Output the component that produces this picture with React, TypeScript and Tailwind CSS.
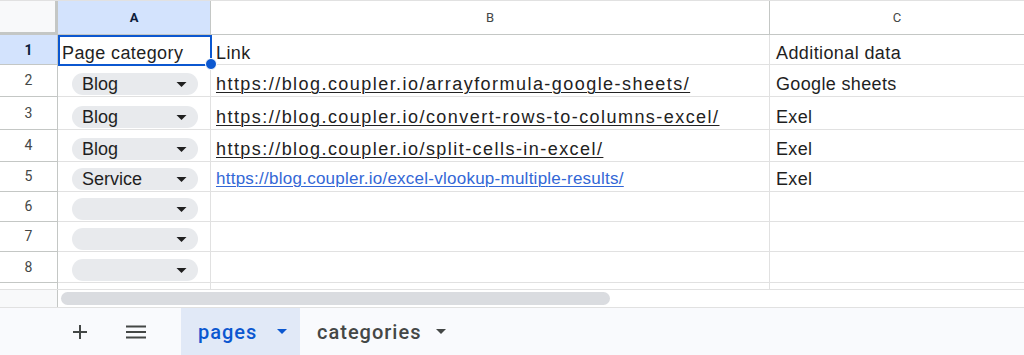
import React from 'react'

const cellFont = {fontFamily: '"Liberation Sans", Arial, sans-serif'}
const uiFont = {fontFamily: 'Roboto, "Liberation Sans", Arial, sans-serif'}

type Row = {
  n: number
  h: string
  cat?: string
  link?: string
  linkBlue?: boolean
  extra?: string
}

const rows: Row[] = [
  {n: 2, h: 'h-[32px]', cat: 'Blog', link: 'https://blog.coupler.io/arrayformula-google-sheets/', extra: 'Google sheets'},
  {n: 3, h: 'h-[33px]', cat: 'Blog', link: 'https://blog.coupler.io/convert-rows-to-columns-excel/', extra: 'Exel'},
  {n: 4, h: 'h-[32px]', cat: 'Blog', link: 'https://blog.coupler.io/split-cells-in-excel/', extra: 'Exel'},
  {n: 5, h: 'h-[30px]', cat: 'Service', link: 'https://blog.coupler.io/excel-vlookup-multiple-results/', linkBlue: true, extra: 'Exel'},
  {n: 6, h: 'h-[30px]', cat: ''},
  {n: 7, h: 'h-[30px]', cat: ''},
  {n: 8, h: 'h-[31px]', cat: ''},
]

function Caret({className}: {className: string}) {
  return (
    <svg viewBox="0 0 10 5" className={className}>
      <path d="M0 0h10L5 5z" fill="currentColor" />
    </svg>
  )
}

function Chip({label}: {label: string}) {
  return (
    <div className="flex h-[22px] w-[126px] items-center justify-between rounded-full bg-[#e8eaed] pl-[10px] pr-[11px] text-[18px] text-[#1f1f1f]">
      <span className="leading-none">{label}</span>
      <Caret className="h-[5px] w-[11px] text-[#1f1f1f]" />
    </div>
  )
}

export default function App() {
  return (
    <div className="flex h-[355px] w-[1024px] flex-col overflow-hidden bg-white" style={cellFont}>
      <div className="relative">
        {/* column headers */}
        <div className="flex h-[35px] border-t border-[#e1e1e1]" style={uiFont}>
          <div className="w-[58px] shrink-0 border-r-[3px] border-b-[3px] border-[#c4c7c5] bg-[#f8f9fa]" />
          <div className="flex w-[153px] shrink-0 items-center justify-center border-r border-b border-[#c4c7c5] bg-[#d3e3fd] text-[13px] font-bold text-[#0b1b3a]">
            A
          </div>
          <div className="flex w-[559px] shrink-0 items-center justify-center border-r border-b border-[#c4c7c5] text-[13px] text-[#444746]">
            B
          </div>
          <div className="flex flex-1 items-center justify-center border-b border-[#c4c7c5] text-[13px] text-[#444746]">
            C
          </div>
        </div>

        {/* row 1 */}
        <div className="flex h-[30px] text-[18px] leading-[20px] tracking-[0.4px] text-[#1f1f1f]">
          <div
            className="flex w-[58px] shrink-0 items-center justify-center border-r border-b border-[#c4c7c5] bg-[#d3e3fd] text-[14px] font-bold tracking-normal text-[#0b1b3a]"
            style={uiFont}
          >
            1
          </div>
          <div className="flex w-[153px] shrink-0 items-end border-r border-b border-[#e1e1e1] pb-[1px] pl-[4px]">
            Page category
          </div>
          <div className="flex w-[559px] shrink-0 items-end border-r border-b border-[#e1e1e1] pb-[1px] pl-[5px]">
            Link
          </div>
          <div className="flex flex-1 items-end border-b border-[#e1e1e1] pb-[1px] pl-[6px]">Additional data</div>
        </div>

        {rows.map((r) => (
          <div key={r.n} className={`flex ${r.h}`}>
            <div
              className="flex w-[58px] shrink-0 items-center justify-center border-r border-b border-[#c4c7c5] text-[14px] text-[#444746]"
              style={uiFont}
            >
              {r.n}
            </div>
            <div className="flex w-[153px] shrink-0 items-end border-r border-b border-[#e1e1e1] pb-[1px] pl-[14px]">
              {r.cat !== undefined && <Chip label={r.cat} />}
            </div>
            <div className="flex w-[559px] shrink-0 items-end border-r border-b border-[#e1e1e1] pb-[2px] pl-[5px]">
              {r.link &&
                (r.linkBlue ? (
                  <span className="text-[17px] leading-[20px] tracking-[0.25px] text-[#3367d6] underline decoration-1 underline-offset-2">
                    {r.link}
                  </span>
                ) : (
                  <span className="text-[18px] leading-[20px] tracking-[1.45px] text-[#222] underline decoration-1 underline-offset-2">
                    {r.link}
                  </span>
                ))}
            </div>
            <div className="flex flex-1 items-end border-b border-[#e1e1e1] pb-[2px] pl-[6px] text-[18px] leading-[20px] tracking-[0.35px] text-[#1f1f1f]">
              {r.extra}
            </div>
          </div>
        ))}

        {/* partial row */}
        <div className="flex h-[6px]">
          <div className="w-[58px] shrink-0 border-r border-[#c4c7c5]" />
          <div className="w-[153px] shrink-0 border-r border-[#e1e1e1]" />
          <div className="w-[559px] shrink-0 border-r border-[#e1e1e1]" />
          <div className="flex-1" />
        </div>

        {/* selection */}
        <div className="pointer-events-none absolute top-[35px] left-[58px] h-[31px] w-[154px] border-2 border-[#0b57d0]" />
        <div className="absolute top-[58px] left-[205px] h-[12px] w-[12px] rounded-full border border-white bg-[#0b57d0]" />
      </div>

      {/* scrollbar */}
      <div className="flex h-[18px] border-t border-[#e1e1e1]">
        <div className="w-[58px] shrink-0 border-r border-[#c4c7c5] bg-[#f8f9fa]" />
        <div className="flex flex-1 items-center pl-[3px]">
          <div className="h-[13px] w-[549px] rounded-full bg-[#dadce0]" />
        </div>
      </div>

      {/* sheet tabs */}
      <div className="flex h-[48px] items-stretch border-t border-[#e1e1e1] bg-[#f9fafd]" style={uiFont}>
        <div className="flex w-[181px] shrink-0 items-center pl-[72px]">
          <svg viewBox="0 0 16 16" className="h-[16px] w-[16px] text-[#444746]">
            <path d="M8 1v14M1 8h14" stroke="currentColor" strokeWidth="2" fill="none" />
          </svg>
          <svg viewBox="0 0 20 14" className="ml-[38px] h-[14px] w-[20px] text-[#444746]">
            <path d="M0 1.5h20M0 7h20M0 12.5h20" stroke="currentColor" strokeWidth="2" fill="none" />
          </svg>
        </div>
        <div className="flex w-[119px] items-center bg-[#e1e9f7] pl-[17px] text-[20px] font-medium tracking-[1px] text-[#0b57d0]">
          <span>pages</span>
          <Caret className="ml-[20px] h-[5px] w-[10px] text-[#0b57d0]" />
        </div>
        <div className="flex items-center pl-[17px] text-[20px] font-medium tracking-[1px] text-[#444746]">
          <span>categories</span>
          <Caret className="ml-[15px] h-[5px] w-[10px] text-[#444746]" />
        </div>
      </div>
    </div>
  )
}
